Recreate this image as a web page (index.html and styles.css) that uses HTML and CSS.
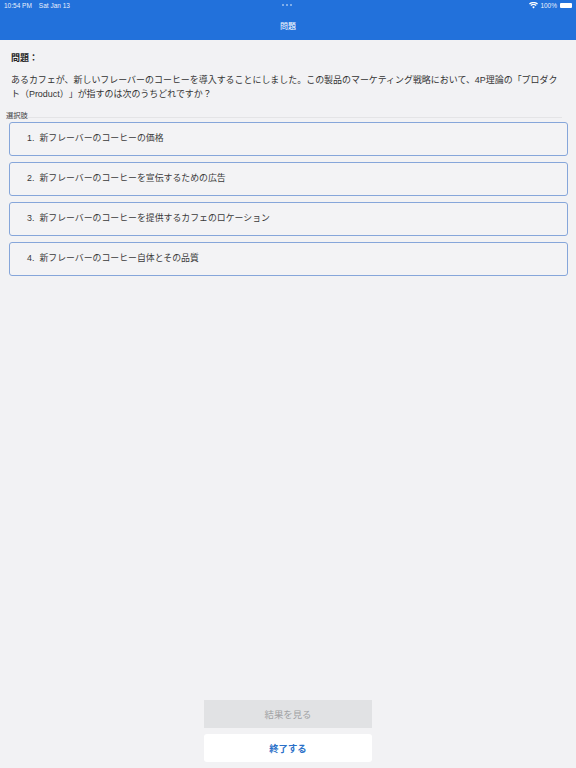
FILE: index.html
```html
<!DOCTYPE html>
<html lang="ja">
<head>
<meta charset="utf-8">
<title>問題</title>
<link rel="stylesheet" href="styles.css">
</head>
<body>
<div class="app">
  <header class="nav">
    <div class="status">
      <div class="status-left"><span>10:54 PM</span><span>Sat Jan 13</span></div>
      <div class="status-right">
        <svg class="wifi" viewBox="0 0 16 12" width="9" height="7"><path d="M8 11.5 5.6 8.6a3.6 3.6 0 0 1 4.8 0zM3.9 6.9 2.5 5.2a8.4 8.4 0 0 1 11 0l-1.4 1.7a6.2 6.2 0 0 0-8.2 0zM1.5 4.3 0 2.6a12 12 0 0 1 16 0l-1.500 1.700a9.800 9.800 0 0 0-13 0z" fill="#fff"/></svg>
        <span>100%</span>
        <span class="battery"></span>
      </div>
    </div>
    <div class="dots"><i></i><i></i><i></i></div>
    <div class="title">問題</div>
  </header>
  <main class="content">
    <section class="question">
      <h2 class="q-label">問題：</h2>
      <p class="q-text">あるカフェが、新しいフレーバーのコーヒーを導入することにしました。この製品のマーケティング戦略において、4P理論の「プロダクト（Product）」が指すのは次のうちどれですか？</p>
    </section>
    <div class="choices-label">選択肢</div>
    <ul class="choices">
      <li class="choice"><span class="num">1.</span>新フレーバーのコーヒーの価格</li>
      <li class="choice"><span class="num">2.</span>新フレーバーのコーヒーを宣伝するための広告</li>
      <li class="choice"><span class="num">3.</span>新フレーバーのコーヒーを提供するカフェのロケーション</li>
      <li class="choice"><span class="num">4.</span>新フレーバーのコーヒー自体とその品質</li>
    </ul>
  </main>
  <footer class="actions">
    <button class="btn btn-disabled">結果を見る</button>
    <button class="btn btn-end">終了する</button>
  </footer>
</div>
</body>
</html>
```
FILE: styles.css
```css
* { box-sizing: border-box; }
html, body { margin: 0; height: 100%; }
body {
  font-family: "Liberation Sans", "Noto Sans CJK JP", sans-serif;
  background: #f2f2f4;
  color: #333;
  text-spacing-trim: space-all;
}
.app { display: flex; flex-direction: column; width: 576px; height: 768px; overflow: hidden; }
.nav {
  position: relative;
  height: 40px;
  flex: none;
  background: #2271db;
  color: #fff;
}
.status {
  display: flex;
  justify-content: space-between;
  align-items: center;
  height: 11px;
  padding: 0 4px;
  font-size: 6.5px;
  line-height: 11px;
  color: #e8f0fb;
}
.status-left { display: flex; gap: 7px; }
.status-right { display: flex; align-items: center; gap: 2px; }
.battery { display: block; width: 12px; height: 5px; background: #fff; border-radius: 1px; margin-left: 1px; }
.dots { position: absolute; top: 4px; left: 282px; display: flex; gap: 2px; }
.dots i { display: block; width: 2px; height: 2px; border-radius: 50%; background: #9fc2ef; }
.title { text-align: center; font-size: 8px; line-height: 14px; margin-top: 9px; }
.content { flex: 1; min-height: 0; padding: 0 8px 0 6px; }
.question { padding: 12px 0 0 5px; }
.q-label { margin: 0; font-size: 9px; line-height: 13px; font-weight: 700; color: #222; }
.q-text { margin: 8px 0 0; font-size: 8.96px; line-height: 14px; width: 552px; color: #333; }
.choices-label { margin-top: 11px; font-size: 7.3px; line-height: 8px; color: #444; border-bottom: 1px solid #e4e4e6; height: 6px; width: 556px; }
.choices { list-style: none; margin: 4px 0 0 3px; padding: 0; display: flex; flex-direction: column; gap: 6px; width: 559px; }
.choice {
  height: 34px;
  padding: 9px 0 0 17px;
  font-size: 8.9px;
  line-height: 12px;
  border: 1px solid #86a6da;
  border-radius: 3px;
  background: #f3f3f5;
  color: #3a3a3a;
}
.num { margin-right: 5px; }
.actions { flex: none; display: flex; flex-direction: column; align-items: center; gap: 6px; padding-bottom: 6px; }
.btn { width: 168px; height: 28px; border: 0; font-family: inherit; font-size: 9.4px; padding: 0; }
.btn-disabled { background: #e1e2e4; color: #a0a1a3; }
.btn-end { background: #fff; color: #2a70c8; font-weight: 700; border-radius: 3px; }
```
